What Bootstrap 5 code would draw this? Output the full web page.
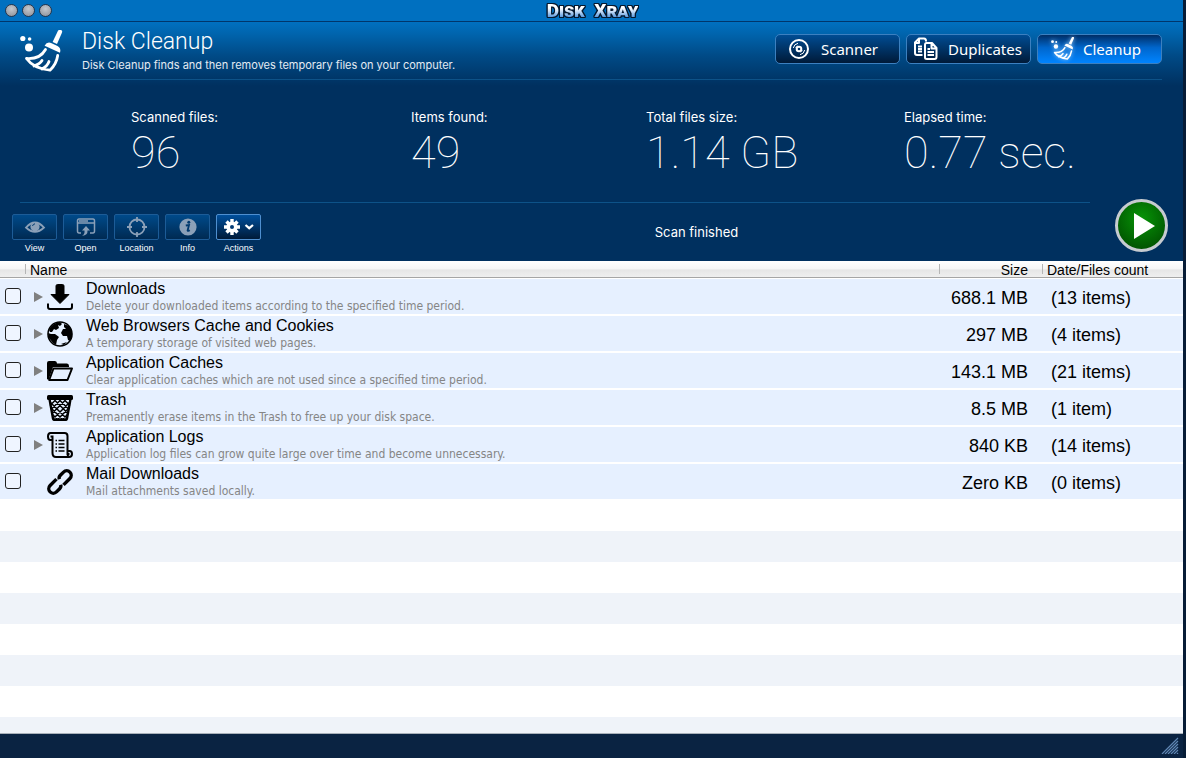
<!DOCTYPE html>
<html lang="en">
<head>
<meta charset="utf-8">
<meta name="viewport" content="width=device-width, initial-scale=1">
<title>Disk Xray</title>
<link href="https://cdn.jsdelivr.net/npm/bootstrap@5.3.0/dist/css/bootstrap.min.css" rel="stylesheet">
<style>
  body { font-family: "Liberation Sans", Arial, sans-serif; background: #0a2342; color: #000; }
  .app-window { border-right: 3px solid #071c36; }
  .title-bar { height: 22px; background: #0070c0; border-bottom: 1px solid #00366b; padding: 0 50px 0 5px; }
  .dots { gap: 4px; width: 47px; }
  .dot { width: 13px; height: 13px; padding: 0; border: 1px solid #26364c; border-radius: 50%; background: radial-gradient(circle at 50% 35%, #c4c8ce, #888d96); }
  .brand-text { font: 900 19px/20px Roboto, sans-serif; font-variant: small-caps; margin: 0;
    background: linear-gradient(#fff 35%, #cfe2f8 50%, #5b9be0 80%); -webkit-background-clip: text; background-clip: text; color: transparent;
    filter: drop-shadow(1px 0 0 #05182e) drop-shadow(-1px 0 0 #05182e) drop-shadow(0 1px 0 #05182e) drop-shadow(0 -1px 0 #05182e); }
  .hero { background: linear-gradient(#0070c0 0, #0064ad 12px, #004a86 34px, #00305f 64px, #00305f 100%); color: #fff; padding: 0 21px 0 20px; height: 239px; }
  .hero-top { height: 58px; border-bottom: 1px solid #0d5288; }
  .hero-text { padding: 4px 0 0 18px; }
  .hero-title { font: 300 23px/31px Roboto, sans-serif; margin: 0; }
  .hero-sub { font: 11px/16px Inter, sans-serif; margin: 0; color: #e3ebf3; }
  .hero-nav, .tools { gap: 6px; }
  .mode-btn { width: 125px; height: 30px; padding: 0 0 0 9px; font: 15px/26px "Noto Sans", sans-serif; color: #fff; border: 1px solid #3c80c0; border-radius: 5px; background: linear-gradient(#004c93, #001a38); }
  .mode-btn:hover { color: #fff; border-color: #5aa0e0; }
  .mode-btn.current { background: linear-gradient(#002e66, #0066cc 45%, #0084ff); }
  .mode-btn.current svg { filter: drop-shadow(0 0 2px #9fd4ff); }
  .stats { display: grid; grid-template-columns: 280fr 235fr 258fr 258fr; padding: 28px 0 0 111px; height: 122px; }
  .stats dt { font: 13px/18px Inter, sans-serif; }
  .stats dd { font: 100 45px/54px Roboto, sans-serif; margin: 0; white-space: nowrap; }
  .hero-rule { border-top: 1px solid #0d5288; margin-right: 72px; }
  .tools { margin-left: -8px; padding-top: 11px; }
  .tool { font-size: 9px; line-height: 16px; color: #fff; width: 45px; }
  .tool-btn { width: 45px; height: 26px; padding: 0; border: 1px solid #1d5c97; border-radius: 2px; background: linear-gradient(#004a8a, #002a52); color: #8ba0b8; }
  .tool-btn.ready { border-color: #4f8fd0; background: linear-gradient(#004f9c, #001a38); color: #fff; }
  .status-text { font: 13px/18px Inter, sans-serif; padding: 20px 0 0 17px; }
  .play-btn { width: 53px; height: 53px; padding: 0; border-radius: 50%; border: 3px solid #c6cbd0; background: radial-gradient(circle at 50% 35%, #079407, #026402 60%, #014301); margin: -4px -6px 0 0; }
  .items-table { width: 100%; table-layout: fixed; border-collapse: separate; border-spacing: 0; }
  .items-table th { font-weight: 400; font-size: 14px; line-height: 15px; height: 17px; padding: 0; background: linear-gradient(#fff, #f6f6f6 50%, #e6e6e6 55%, #efefef); border-bottom: 1px solid #a5a5a5; }
  .items-table th span { display: block; height: 10px; line-height: 12px; }
  .cap-line { border-left: 1px solid #b5b5b5; }
  .items-table td { height: 37px; padding: 0; background: #e6f0ff; border-top: 1px solid #fff; border-bottom: 1px solid #fff; vertical-align: middle; }
  .items-table td.amount { font-size: 18px; line-height: 20px; padding: 2px 0 0 9px; }
  .items-table .num { text-align: right; }
  .items-table td.amount.num, .num span { padding-right: 14px; }
  .items-table td.item-text { padding-top: 1px; }
  .lead-in { padding-left: 9px; }
  .pick { appearance: none; display: block; width: 16px; height: 16px; margin: 0 0 1px 5px; border: 1px solid #222; border-radius: 3px; background: #eff5ff; }
  .pick:checked { background: #0070c0; }
  .arrow { width: 9px; height: 35px; padding: 0; border: 0; background: none; color: #808080; display: flex; align-items: center; }
  .item-name { font-size: 16px; line-height: 18px; }
  .item-note { font: 12px/16px "DejaVu Sans Condensed", "DejaVu Sans", sans-serif; color: #858585; }
  .filler { background: repeating-linear-gradient(#fff 0, #fff 31px, #eff3f9 31px, #eff3f9 62px); border-bottom: 1px solid #a9b1ba; }
  .foot { height: 24px; background: #0a2342; }
</style>
</head>
<body>
<svg class="d-none" xmlns="http://www.w3.org/2000/svg">
  <symbol id="broom" viewBox="0 0 44 44">
    <g fill="currentColor">
      <circle cx="2.800" cy="8.500" r="2.600"/><circle cx="9.600" cy="9" r="1.800"/><circle cx="9" cy="17.500" r="4"/>
      <path d="M38 .8Q39.500-1 41.400.2Q42.600 1 42 2.600L37 14L32.600 12Z"/>
      <path d="M24.600 15.800Q27 11.200 31.600 13.200L37.500 16Q41.400 18.300 40 22.800Z"/>
      <g fill="none" stroke="currentColor" stroke-width="2.800" stroke-linejoin="round" stroke-linecap="round"><path d="M25.500 19.500Q20 29.500 6.500 28.500Q13.500 38.500 30 40.200Q36.500 34 37.700 25.500M14 36Q20 34 22 30.500M22 39Q27.500 36 29 31.500"/></g>
    </g>
  </symbol>
  <symbol id="tri" viewBox="0 0 9 10"><path d="M0 0L9 5L0 10Z" fill="currentColor"/></symbol>
</svg>

<div class="app-window d-flex flex-column min-vh-100">
  <header class="title-bar d-flex align-items-center flex-shrink-0">
    <div class="dots d-flex">
      <button class="dot" type="button" aria-label="Close"></button>
      <button class="dot" type="button" aria-label="Minimize"></button>
      <button class="dot" type="button" aria-label="Zoom"></button>
    </div>
    <h1 class="brand-text mx-auto">Disk&nbsp; Xray</h1>
  </header>

  <section class="hero flex-shrink-0">
    <div class="hero-top d-flex">
      <svg width="44" height="44" class="mt-2 flex-shrink-0" aria-hidden="true"><use href="#broom"/></svg>
      <div class="hero-text">
        <h2 class="hero-title">Disk Cleanup</h2>
        <p class="hero-sub">Disk Cleanup finds and then removes temporary files on your computer.</p>
      </div>
      <nav class="hero-nav d-flex ms-auto mt-2 pt-1">
        <button class="btn mode-btn d-flex align-items-center" type="button">
          <svg width="24" height="24" viewBox="0 0 24 24" class="ms-1 me-2" fill="none" stroke="#fff" aria-hidden="true"><circle cx="10" cy="12" r="9" stroke-width="2"/><circle cx="10" cy="12" r="2.300" stroke-width="2"/><path d="M4.300 11A6 6 0 0 1 9 6.300M6.800 10.800A3.700 3.700 0 0 1 8.500 8.900M15.700 13A6 6 0 0 1 11 17.700M13.200 13.200A3.700 3.700 0 0 1 11.500 15.100"/></svg>Scanner</button>
        <button class="btn mode-btn d-flex align-items-center" type="button">
          <svg width="24" height="24" viewBox="0 0 24 24" class="me-1 overflow-visible" fill="none" stroke="#fff" stroke-width="2" stroke-linejoin="round" aria-hidden="true"><path d="M6.500 18H1Q-1 18-1 16V5.500L3 1.500H8Q10 1.500 10 4V4.500M-1 6H3V2M2 9.500H6M2 12H6M2 14.500H6"/><path d="M14 6H10.500Q9 6 9 8V20.500Q9 22 11 22H18.500Q20.500 22 20.500 20V11L16 6ZM15.500 6V11.500H20.500M11.500 12H14M11.500 15H18M11.500 18H18"/></svg><span class="ps-1">Duplicates</span></button>
        <button class="btn mode-btn current d-flex align-items-center" type="button" aria-pressed="true">
          <svg width="24" height="24" class="ms-1 me-2 flex-shrink-0" aria-hidden="true"><use href="#broom"/></svg>Cleanup</button>
      </nav>
    </div>

    <dl class="stats mb-0">
      <div><dt>Scanned files:</dt><dd>96</dd></div>
      <div><dt>Items found:</dt><dd>49</dd></div>
      <div><dt>Total files size:</dt><dd>1.14 GB</dd></div>
      <div><dt>Elapsed time:</dt><dd>0.77 sec.</dd></div>
    </dl>

    <div class="hero-rule"></div>
    <div class="d-flex align-items-start">
      <div class="tools d-flex text-center">
        <label class="tool"><button class="tool-btn d-flex align-items-center justify-content-center" type="button">
          <svg width="22" height="16" viewBox="0 0 22 16" aria-hidden="true"><path d="M2 8.500Q11-1.500 20 8.500Q11 17 2 8.500Z" fill="none" stroke="currentColor" stroke-width="1.800"/><circle cx="11" cy="7.800" r="4.600" fill="currentColor"/><path d="M8.500 7Q9 5 11 4.800" fill="none" stroke="#00396e"/></svg></button>View</label>
        <label class="tool"><button class="tool-btn d-flex align-items-center justify-content-center" type="button">
          <svg width="20" height="20" viewBox="0 0 20 20" fill="none" stroke="currentColor" stroke-width="1.500" aria-hidden="true"><path d="M5 16H3Q1.500 16 1.500 14V4Q1.500 2 3 2H17Q18.500 2 18.500 4V14Q18.500 16 17 16H14M1.500 6H18.500M3 4H12"/><path d="M10 9L14 13.500H11.500Q12 18 6 19Q9 17 8.500 13.500H6Z" fill="currentColor" stroke="none"/></svg></button>Open</label>
        <label class="tool"><button class="tool-btn d-flex align-items-center justify-content-center" type="button">
          <svg width="20" height="20" viewBox="0 0 20 20" fill="none" stroke="currentColor" stroke-width="1.800" aria-hidden="true"><circle cx="10" cy="10" r="7.500"/><path d="M10 0V5M10 15V20M0 10H5M15 10H20"/></svg></button>Location</label>
        <label class="tool"><button class="tool-btn d-flex align-items-center justify-content-center" type="button">
          <svg width="18" height="18" viewBox="0 0 18 18" aria-hidden="true"><circle cx="9" cy="9" r="8.600" fill="currentColor"/><circle cx="9.800" cy="4.300" r="1.500" fill="#00396e"/><path d="M6.800 7.500L10 7L8.600 12.500Q9 13.300 10.800 12.200" fill="none" stroke="#00396e" stroke-width="1.800"/></svg></button>Info</label>
        <label class="tool"><button class="tool-btn ready d-flex align-items-center justify-content-center" type="button" aria-haspopup="true">
          <svg width="30" height="18" viewBox="0 0 30 18" aria-hidden="true"><g stroke="currentColor" stroke-width="3.400"><path d="M8 1V17M0 9H16M2.500 3.500L13.500 14.500M13.500 3.500L2.500 14.500"/></g><circle cx="8" cy="9" r="5.600" fill="currentColor"/><circle cx="8" cy="9" r="2" fill="#003a75"/><path d="M21.500 7L25.200 10.200L29 7" fill="none" stroke="currentColor" stroke-width="2.200"/></svg></button>Actions</label>
      </div>
      <div class="status-text mx-auto">Scan finished</div>
      <button class="play-btn d-flex align-items-center justify-content-center flex-shrink-0" type="button" aria-label="Start scan">
        <svg width="22" height="26" viewBox="0 0 22 26" class="ms-2" aria-hidden="true"><path d="M0 0L21 13L0 26Z" fill="#fff"/></svg>
      </button>
    </div>
  </section>

  <table class="items-table flex-shrink-0">
    <colgroup><col style="width:25px"><col style="width:61px"><col><col style="width:103px"><col style="width:141px"></colgroup>
    <thead><tr>
      <th></th>
      <th colspan="2"><span class="cap-line ps-1">Name</span></th>
      <th class="num"><span class="cap-line">Size</span></th>
      <th><span class="cap-line ps-1">Date/Files count</span></th>
    </tr></thead>
    <tbody>
      <tr><td><input class="pick" type="checkbox" aria-label="Downloads"></td>
        <td><div class="lead-in d-flex align-items-center"><button class="arrow me-1" type="button" aria-label="Expand"><svg width="9" height="10"><use href="#tri"/></svg></button>
          <svg width="26" height="26" viewBox="0 0 26 26" aria-hidden="true"><path d="M9 2Q9 .5 10.500 .5H15.500Q17 .5 17 2V10.500H22L13 19.500L4 10.500H9Z" stroke="#000" stroke-linejoin="round"/><path d="M1 19.500V23Q1 25 3 25H23Q25 25 25 23V19.500" fill="none" stroke="#000" stroke-width="2"/></svg></div></td>
        <td class="item-text"><div class="item-name">Downloads</div><div class="item-note">Delete your downloaded items according to the specified time period.</div></td>
        <td class="amount num">688.1 MB</td><td class="amount">(13 items)</td></tr>
      <tr><td><input class="pick" type="checkbox" aria-label="Web Browsers Cache and Cookies"></td>
        <td><div class="lead-in d-flex align-items-center"><button class="arrow me-1" type="button" aria-label="Expand"><svg width="9" height="10"><use href="#tri"/></svg></button>
          <svg width="26" height="26" viewBox="0 0 26 26" aria-hidden="true"><circle cx="13" cy="13" r="12" fill="none" stroke="#000" stroke-width="1.600"/><path d="M2 9Q4 4 9 2L13 1L15 3L13 5L11 4L12 7L9 9L7 8L5 11L3 11ZM1 12L4 13L8 13L12 16L10 19L9 24L6 22L2 17ZM17 3L22 5L25 10V17L23 20L21 19L20 15L16 15L14 12L16 8L19 8L17 6ZM14 23L17 24L20 21Z"/></svg></div></td>
        <td class="item-text"><div class="item-name">Web Browsers Cache and Cookies</div><div class="item-note">A temporary storage of visited web pages.</div></td>
        <td class="amount num">297 MB</td><td class="amount">(4 items)</td></tr>
      <tr><td><input class="pick" type="checkbox" aria-label="Application Caches"></td>
        <td><div class="lead-in d-flex align-items-center"><button class="arrow me-1" type="button" aria-label="Expand"><svg width="9" height="10"><use href="#tri"/></svg></button>
          <svg width="26" height="26" viewBox="0 0 26 26" aria-hidden="true"><path d="M0 21V5Q0 3 2 3H8Q10 3 10 5.500H20Q22 5.500 22 8V9H6L1.500 22Z"/><path d="M6.500 10.500H25L20.500 22H2.200Z" fill="none" stroke="#000" stroke-width="2" stroke-linejoin="round"/></svg></div></td>
        <td class="item-text"><div class="item-name">Application Caches</div><div class="item-note">Clear application caches which are not used since a specified time period.</div></td>
        <td class="amount num">143.1 MB</td><td class="amount">(21 items)</td></tr>
      <tr><td><input class="pick" type="checkbox" aria-label="Trash"></td>
        <td><div class="lead-in d-flex align-items-center"><button class="arrow me-1" type="button" aria-label="Expand"><svg width="9" height="10"><use href="#tri"/></svg></button>
          <svg width="26" height="26" viewBox="0 0 26 26" aria-hidden="true"><rect width="26" height="5" rx="1.500"/><path d="M2.500 4L6 23.500Q6.300 25 8 25H18Q19.700 25 20 23.500L23.500 4" fill="none" stroke="#000" stroke-width="2.400"/><path d="M3 7L20 24M7 4.500L21 18.500M12 4.500L22 14.500M17 4.500L23 10.500M4.500 13.500L15.500 24.500M5.500 19.500L10 24M23 7L6 24M19 4.500L5 18.500M14 4.500L4 14.500M9 4.500L3 10.500M21.500 13.500L10.500 24.500M20.500 19.500L16 24" stroke="#000" stroke-width="1.500"/></svg></div></td>
        <td class="item-text"><div class="item-name">Trash</div><div class="item-note">Premanently erase items in the Trash to free up your disk space.</div></td>
        <td class="amount num">8.5 MB</td><td class="amount">(1 item)</td></tr>
      <tr><td><input class="pick" type="checkbox" aria-label="Application Logs"></td>
        <td><div class="lead-in d-flex align-items-center"><button class="arrow me-1" type="button" aria-label="Expand"><svg width="9" height="10"><use href="#tri"/></svg></button>
          <svg width="26" height="26" viewBox="0 0 26 26" fill="none" stroke="#000" stroke-width="2" aria-hidden="true"><path d="M3.500 1H17.500Q20.500 1 20.500 4V19H22.500Q25 19 25 22Q25 25 22 25H9Q5.500 25 5.500 21V8H3.500Q1 8 1 4.500Q1 1 3.500 1ZM3.500 4.500H5.500V8M20.500 19V22H22.500M20.500 22Q20.500 24 22 25"/><path d="M8.500 8.500H10M8.500 12H10M8.500 15.500H10M8.500 19H10M11.500 8.500H17.500M11.500 12H17.500M11.500 15.500H17.500M11.500 19H17.500" stroke-width="1.600"/></svg></div></td>
        <td class="item-text"><div class="item-name">Application Logs</div><div class="item-note">Application log files can grow quite large over time and become unnecessary.</div></td>
        <td class="amount num">840 KB</td><td class="amount">(14 items)</td></tr>
      <tr><td><input class="pick" type="checkbox" aria-label="Mail Downloads"></td>
        <td><div class="lead-in d-flex align-items-center"><span class="arrow me-1"></span>
          <svg width="26" height="26" viewBox="0 0 26 26" fill="none" stroke="#000" stroke-width="3.400" aria-hidden="true"><g transform="rotate(-45 13 13)"><path d="M13.500 8.500H4.500A4.500 4.500 0 0 0 4.500 17.500H9Q11.500 17.500 12.500 15.500" transform="translate(-1 0)"/><path d="M12.500 17.500H21.500A4.500 4.500 0 0 0 21.500 8.500H17Q14.500 8.500 13.500 10.500" transform="translate(1 0)"/></g></svg></div></td>
        <td class="item-text"><div class="item-name">Mail Downloads</div><div class="item-note">Mail attachments saved locally.</div></td>
        <td class="amount num">Zero KB</td><td class="amount">(0 items)</td></tr>
    </tbody>
  </table>
  <div class="filler flex-grow-1"></div>
  <footer class="foot d-flex justify-content-end align-items-end flex-shrink-0">
    <svg width="18" height="17" viewBox="0 0 18 17" class="mb-1 me-1" stroke="#5f86b4" stroke-width="1.200" aria-hidden="true"><path d="M1 17L17 1M4 17L17 4M7 17L17 7M10 17L17 10M13 17L17 13M16 17L17 16"/></svg>
  </footer>
</div>
<script src="https://cdn.jsdelivr.net/npm/bootstrap@5.3.0/dist/js/bootstrap.bundle.min.js"></script>
</body>
</html>
